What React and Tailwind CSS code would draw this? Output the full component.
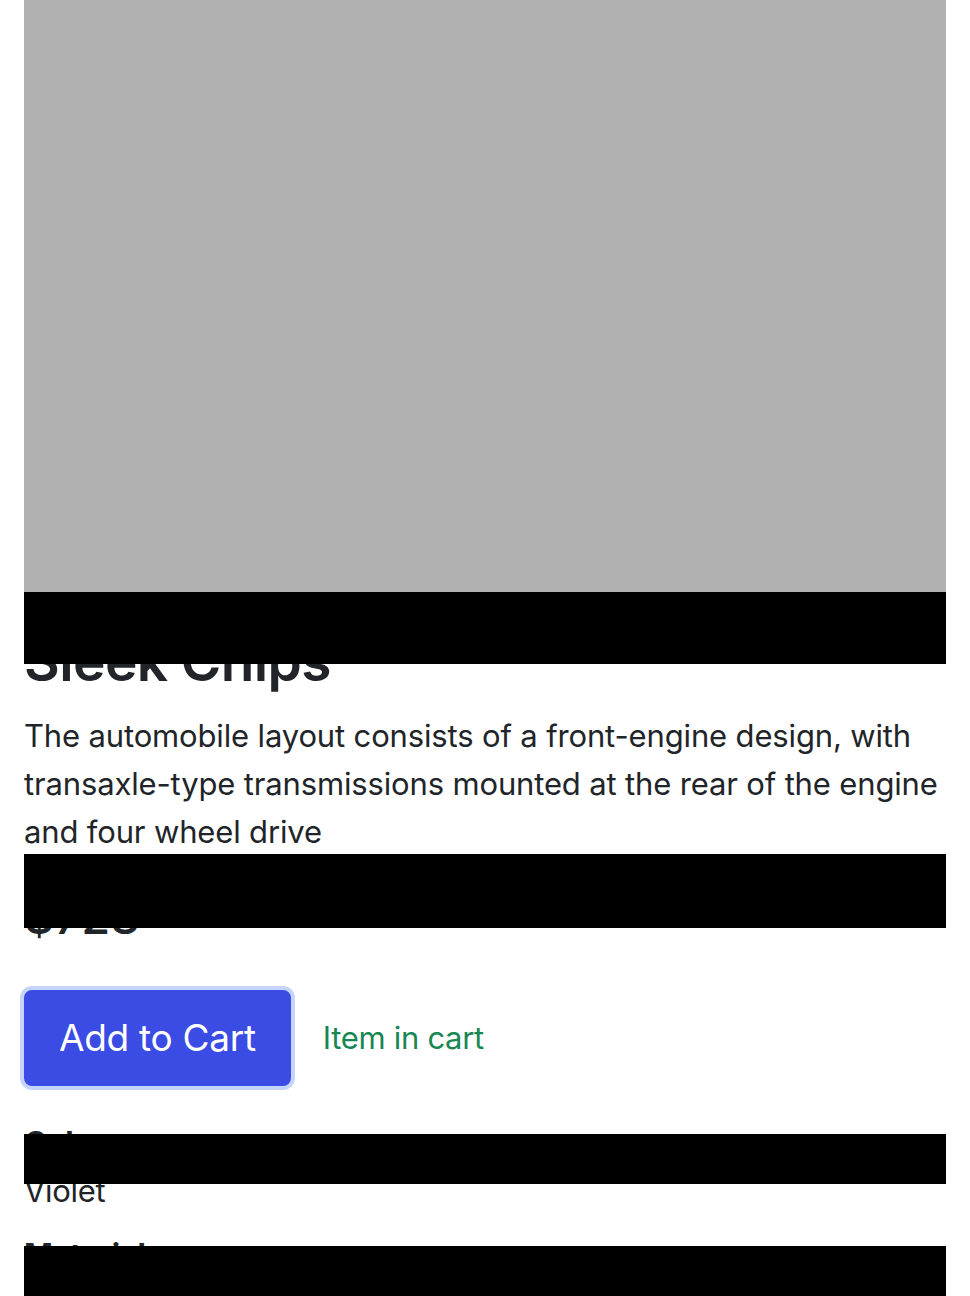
export default function App() {
  return (
    <div className="relative min-h-[1296px] bg-white text-[#212529]">
      <div className="flex flex-col px-6 font-['Inter','Helvetica_Neue',Arial,sans-serif]">
        <div className="h-[592px] w-full bg-[#b1b1b1]" />
        <h1 className="mt-[34px] mb-4 text-[55px] leading-[70px] font-semibold tracking-[-0.6px]">Sleek Chips</h1>
        <p className="mb-8 text-[31px] leading-[48px] tracking-[-0.15px]">
          The automobile layout consists of a front-engine design, with transaxle-type transmissions mounted at the rear of the engine and four wheel drive
        </p>
        <h3 className="mb-[45px] text-[47px] leading-[57px] font-medium">$728</h3>
        <div className="flex items-center gap-8 mb-[33px]">
          <button className="h-[96px] px-[33px] rounded-[8px] bg-[#3a4ce4] text-white text-[37px] leading-[60px] tracking-[-0.3px] border-2 border-[#3a4ce4] shadow-[0_0_0_4px_#c4d4fb]">
            Add to Cart
          </button>
          <span className="text-[31px] text-[#198754] tracking-[-0.3px]">Item in cart</span>
        </div>
        <dl className="text-[31px] leading-[48px] tracking-[-0.3px]">
          <dt className="font-bold">Color</dt>
          <dd className="mb-4">Violet</dd>
          <dt className="font-bold">Material</dt>
        </dl>
      </div>
      <div className="absolute left-6 right-6 top-[592px] h-[72px] bg-black" />
      <div className="absolute left-6 right-6 top-[854px] h-[74px] bg-black" />
      <div className="absolute left-6 right-6 top-[1134px] h-[50px] bg-black" />
      <div className="absolute left-6 right-6 top-[1246px] h-[50px] bg-black" />
    </div>
  );
}
